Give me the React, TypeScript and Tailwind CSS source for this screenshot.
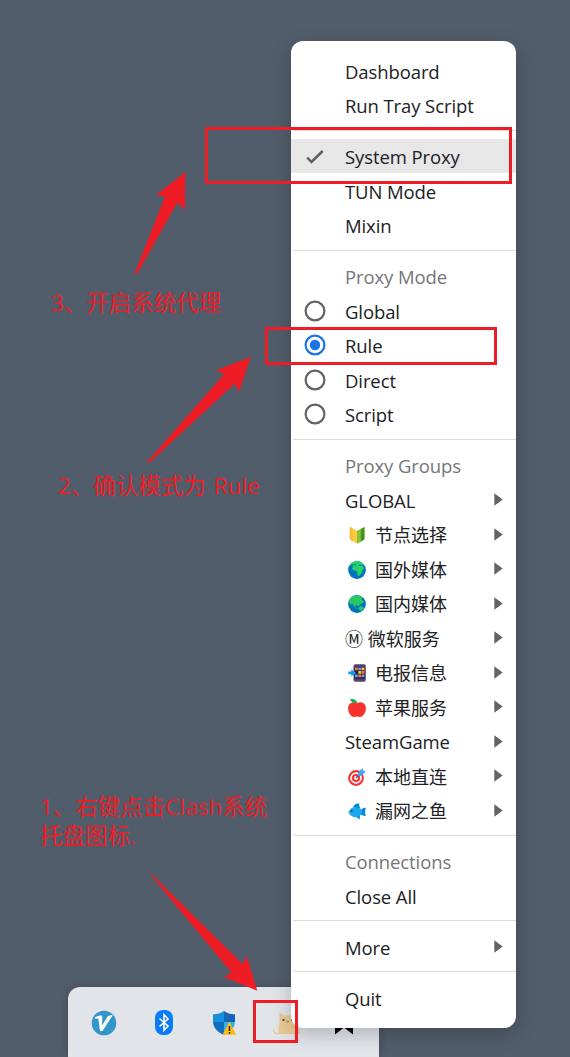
import type { ReactNode } from 'react';

const Leaf = () => (
  <svg viewBox="0 0 18 18" className="h-[18px] w-[18px]">
    <path d="M1.800.8 9.200 5v12.400L2.600 14Q1.800 13.500 1.800 12.600Z" fill="#ffc83d" />
    <path d="M1.800.8 4.500 2.200V14.900L2.600 14Q1.800 13.500 1.800 12.600Z" fill="#f9b93a" />
    <path d="M16.600.8 9.200 5v12.400l6.600-3.400q.8-.5.8-1.400Z" fill="#44911b" />
    <path d="M12.800 2.900 9.200 5v12.400l3.600-1.800Z" fill="#86c83c" />
  </svg>
);

const Globe = ({ east }: { east?: boolean }) => (
  <svg viewBox="0 0 18 18" className="h-[18px] w-[18px]">
    <circle cx="9" cy="9" r="8.900" fill="#0074ba" />
    {east ? (
      <>
        <path d="M1 6C2 2.500 5 .5 8 .3l5 1 1.500 1.700-1 2 2.500 1-1.500 2.500-2.500.5-1 2.500-2.500-1.500L6.500 12 4.500 9 2 9.500Z" fill="#26c963" />
        <path d="m10 13 3-2 2 1 1 1.500-2.200 2.500-2.300-.7Z" fill="#26c963" />
        <path d="m7 12.500 1.500 1.200" stroke="#26c963" />
      </>
    ) : (
      <>
        <path d="M1.500 5C3 2 6 .3 9 .1c3.500.1 5.500 1.600 7 3.400l-2 .9-1.500-.8-2 .5 1 .9 3.500 0 1.200 2.500-2.400 2.600-.3 2.300L11 15l-1.500-1-.5-4-3-.5L4 7.500l1.200-2-2.200-.9Z" fill="#26d366" />
        <path d="m3 5 2.500-1.500L8 4" stroke="#0074ba" fill="none" />
        <path d="m14.800 10.500-.5 2 1-1Z" fill="#26c963" />
      </>
    )}
  </svg>
);

const Phone = () => (
  <svg viewBox="0 0 18 18" className="h-[18px] w-[18px]">
    <rect x="5.500" y=".3" width="12.300" height="17.400" rx="1.800" fill="#534272" />
    <rect x="6.600" y="2.800" width="10.200" height="12" fill="#291c42" />
    <path d="M7 3.500h2.800v2.800H7zM13.600 7h2.800v2.800h-2.800zM10.300 10.500h2.800v2.800h-2.800z" fill="#ff7a2f" />
    <path d="M10.300 3.500h2.800v2.800h-2.800zM7 10.500h2.800v2.800H7zM13.600 10.500h2.800v2.800h-2.800z" fill="#4fa9e8" />
    <path d="M13.600 3.500h2.800v2.800h-2.800zM10.300 7h2.800v2.800h-2.800z" fill="#ffc83d" />
    <path d="M.3 7.500h3V5.200L8 8.900l-4.700 3.600v-2.300h-3Z" fill="#0e9ee8" />
  </svg>
);

const Apple = () => (
  <svg viewBox="0 0 18 18" className="h-[18px] w-[18px]">
    <path d="M9 4.200c4-2.300 8.900-.1 8.900 5 0 4.200-2.700 8.700-5.900 8.700-1.200 0-1.900-.3-3-.3s-1.800.3-3 .3C2.800 17.900.1 13.400.1 9.200c0-5.100 4.900-7.300 8.900-5Z" fill="#f8312f" />
    <path d="M9.500 4.200C6 4.700 2.700 3.300 2.100.3 5.800-.7 8.800 1 9.500 4.200Z" fill="#16b455" />
  </svg>
);

const Target = () => (
  <svg viewBox="0 0 18 18" className="h-[18px] w-[18px]">
    <circle cx="8" cy="10" r="7.900" fill="#f8312f" />
    <circle cx="8" cy="10" r="5.800" fill="#fff" />
    <circle cx="8" cy="10" r="4.100" fill="#f8312f" />
    <circle cx="8" cy="10" r="2" fill="#fff" />
    <path d="m8 10 4-4" stroke="#26588c" strokeWidth="1.100" />
    <path d="m10 4.700 4.300-4.600.8 2.500 2.700.8-4.400 4.400-3.200.1Z" fill="#46a4f3" />
  </svg>
);

const Fish = () => (
  <svg viewBox="0 0 18 18" className="h-[18px] w-[18px]">
    <path d="M5 5.500C6 2.500 8 1.200 11.500 1.500c-.8 1.200-.5 2.700 1.300 5ZM7 14l4.500 3.500L12 13Z" fill="#0084ce" />
    <path d="M12 8.500c1.500-.7 3-3.300 5.800-2.600-.9 2-1.200 4.900.1 8.200-2.700.2-4.200-1-5.900-2Z" fill="#0089d8" />
    <path d="M.3 10.300C2 6.500 5 4.700 8.300 5c3.200.2 5.400 2.700 6.300 5-1.300 2.900-3.800 5.200-6.800 5.200-3.600.1-5.800-1.800-7.500-4.900Z" fill="#19a9ee" />
    <circle cx="3.700" cy="9" r=".9" fill="#24445c" />
  </svg>
);

type RowProps = {
  text: string;
  icon?: ReactNode;
  mark?: ReactNode;
  muted?: boolean;
  submenu?: boolean;
  active?: boolean;
  cjk?: boolean;
};

const Row = ({ text, icon, mark, muted, submenu, active, cjk }: RowProps) => (
  <div className={`flex h-[34.5px] items-center pr-[13px] ${active ? 'bg-[#e7e7e8]' : ''}`}>
    <div className="flex w-[54px] shrink-0 items-center pl-[13px]">{mark}</div>
    {icon && <div className="mt-[3px] mr-[9px] ml-[3px] shrink-0">{icon}</div>}
    <div
      className={`grow whitespace-nowrap pt-[3px] ${cjk ? 'text-[18px]' : 'text-[18.5px] tracking-[-0.1px]'} ${muted ? 'text-[#757679]' : 'text-[#202124]'}`}
    >
      {text}
    </div>
    {submenu && (
      <svg viewBox="0 0 9 13" className="mt-px h-[13px] w-[9px]">
        <path d="M.3.3v12.400L8.700 6.500Z" fill="#626366" />
      </svg>
    )}
  </div>
);

const Separator = () => (
  <div className="flex h-[16.5px] items-center pl-[2px]">
    <div className="h-px w-full bg-[#dadce0]" />
  </div>
);

const Radio = ({ checked }: { checked?: boolean }) => (
  <svg viewBox="0 0 22 22" className="mt-px h-[22px] w-[22px]">
    <circle cx="11" cy="11" r="9.400" fill="none" stroke={checked ? '#1a73e8' : '#626368'} strokeWidth="2.200" />
    {checked && <circle cx="11" cy="11" r="5.200" fill="#1a73e8" />}
  </svg>
);

const Check = () => (
  <svg viewBox="0 0 22 22" className="mt-[2px] h-[22px] w-[22px]">
    <path d="m3.200 11.500 4.300 4.500L18.700 5" fill="none" stroke="#5f6063" strokeWidth="2.500" />
  </svg>
);

const Menu = () => (
  <div className="absolute top-[41px] left-[291px] h-[987px] w-[225px] rounded-[12px] bg-white pt-[12px] leading-[24px] shadow-[0_6px_20px_rgba(0,0,0,0.22)]">
    <Row text="Dashboard" />
    <Row text="Run Tray Script" />
    <Separator />
    <Row text="System Proxy" active mark={<Check />} />
    <Row text="TUN Mode" />
    <Row text="Mixin" />
    <Separator />
    <Row text="Proxy Mode" muted />
    <Row text="Global" mark={<Radio />} />
    <Row text="Rule" mark={<Radio checked />} />
    <Row text="Direct" mark={<Radio />} />
    <Row text="Script" mark={<Radio />} />
    <Separator />
    <Row text="Proxy Groups" muted />
    <Row text="GLOBAL" submenu />
    <Row text="节点选择" icon={<Leaf />} submenu cjk />
    <Row text="国外媒体" icon={<Globe />} submenu cjk />
    <Row text="国内媒体" icon={<Globe east />} submenu cjk />
    <Row text="Ⓜ 微软服务" submenu cjk />
    <Row text="电报信息" icon={<Phone />} submenu cjk />
    <Row text="苹果服务" icon={<Apple />} submenu cjk />
    <Row text="SteamGame" submenu />
    <Row text="本地直连" icon={<Target />} submenu cjk />
    <Row text="漏网之鱼" icon={<Fish />} submenu cjk />
    <Separator />
    <Row text="Connections" muted />
    <Row text="Close All" />
    <Separator />
    <Row text="More" submenu />
    <Separator />
    <Row text="Quit" />
  </div>
);

const Tray = () => (
  <div className="absolute top-[987px] left-[68px] flex h-[70px] w-[311px] items-start rounded-t-[12px] bg-[#e1e4e9] pt-[23px] pl-[23px] shadow-[0_0_8px_rgba(0,0,0,0.2)]">
    <svg viewBox="0 0 26 26" className="h-[26px] w-[26px]">
      <circle cx="13" cy="13" r="12.300" fill="#3396cb" />
      <path d="m4 7 6-1.800 1.300 1-.3 9.300L17 6l5-1.200L11.500 21H9L7.300 8.500 4 8.800Z" fill="#fff" />
    </svg>
    <svg viewBox="0 0 18 25" className="ml-[38px] h-[25px] w-[18px]">
      <rect width="18" height="25" rx="8" fill="#087cf7" />
      <path d="m4.500 8.500 8.500 7.500-4 4.200V4.800l4 4.200-8.500 7.500" fill="none" stroke="#fff" strokeWidth="1.600" />
    </svg>
    <svg viewBox="0 0 25 26" className="ml-[39px] h-[26px] w-[25px]">
      <path d="M12 1Q8 4 1 4.500V12h11Z" fill="#1690dc" />
      <path d="M12 1q4 3 11 3.500V12H12Z" fill="#1266ba" />
      <path d="M1 12h11v13C6 22.500 1.500 18.500 1 12Z" fill="#116dc0" />
      <path d="M12 12h11c-.5 6.500-5 10.500-11 13Z" fill="#31aef0" />
      <path d="m17.300 11.500 7 13.200H10.500Z" fill="#ffbd12" />
      <path d="M17.500 16v5M17.500 22v1.700" stroke="#332b15" strokeWidth="1.600" />
    </svg>
    <svg viewBox="0 0 30 26" className="ml-[34px] h-[26px] w-[30px]">
      <path d="M9 23.500C4 24 2 22 2.500 19" fill="none" stroke="#e6cda8" strokeWidth="1.500" />
      <path d="m8.500 2 4 3.500h8L25 2l4 22H8q-1.500-5 .5-12Z" fill="#ebc994" />
      <circle cx="12.500" cy="10" r="1.100" fill="#40372e" />
      <circle cx="21" cy="10" r="1.100" fill="#40372e" />
      <path d="m15.500 11 1.200 1 1.200-1" stroke="#7a6047" fill="none" />
    </svg>
    <svg viewBox="0 0 18 26" className="ml-[34px] h-[26px] w-[18px]">
      <path d="M0 2h18v22.500l-9-7-9 7Z" fill="#05070c" />
    </svg>
  </div>
);

export default function App() {
  return (
    <div className="relative h-[1057px] w-[570px] overflow-hidden bg-[#525d6b] font-['Open_Sans','Noto_Sans_CJK_SC',sans-serif]">
      <Tray />
      <Menu />
      <div className="absolute top-[127px] left-[205px] h-[57px] w-[307px] border-3 border-[#ee1c25]" />
      <div className="absolute top-[327px] left-[265px] h-[38px] w-[232px] border-3 border-[#ee1c25]" />
      <div className="absolute top-[1000px] left-[253px] h-[43px] w-[45px] border-3 border-[#ee1c25]" />
      <svg viewBox="0 0 570 1057" className="absolute inset-0 h-[1057px] w-[570px]" fill="#ee1c25">
        <path d="M134.700 273.300 165 196.300 156 195.300 185.300 171.700 185 210 177.300 202.700 137 274.300Z" />
        <path d="M147 462 224 374.300 216 370.300 250.700 357 239 392.300 234.700 383.700 148.700 463.300Z" />
        <path d="M150.700 875 152.500 875 242.500 964 246.700 955.700 257.300 990.700 223.700 976.700 231.700 972.700Z" />
      </svg>
      <div className="absolute top-[288px] left-[51px] whitespace-nowrap text-[22.500px] leading-[29px] text-[#ee1c25]">3、开启系统代理</div>
      <div className="absolute top-[471px] left-[58px] whitespace-nowrap text-[22.500px] leading-[29px] text-[#ee1c25] [word-spacing:2px]">2、确认模式为 Rule</div>
      <div className="absolute top-[792px] left-[40px] whitespace-nowrap text-[22.500px] leading-[29px] text-[#ee1c25]">
        1、右键点击Clash系统
        <br />
        托盘图标.
      </div>
    </div>
  );
}
